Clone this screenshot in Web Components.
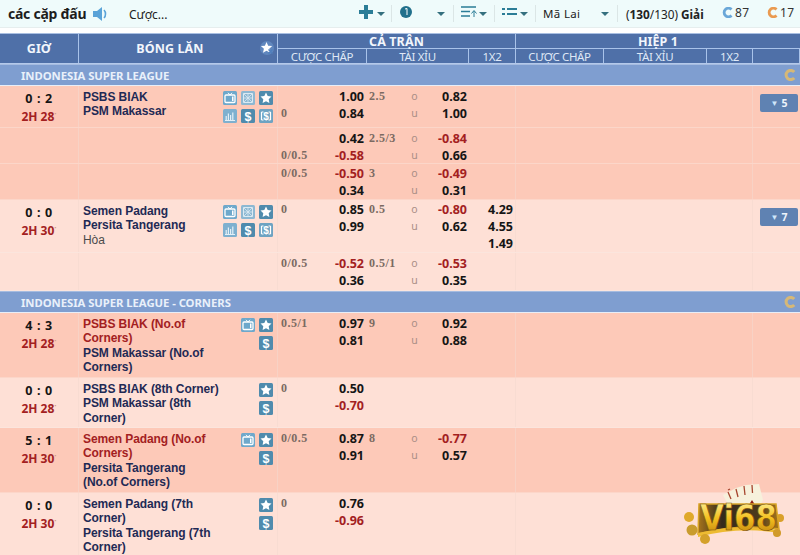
<!DOCTYPE html>
<html lang="vi">
<head>
<meta charset="utf-8">
<title>Bóng lăn</title>
<style>
  html, body { margin: 0; height: 555px; overflow: hidden; background: #fff; }
  body { position: relative; font-family: "Noto Sans", "DejaVu Sans", sans-serif; }
  match-row b { color: #a3201f; }
  match-row small { font-size: 12px; font-weight: 400; color: #4a4a4a; }
</style>
</head>
<body>
<top-bar></top-bar>
<table-head></table-head>

<league-bar>INDONESIA SUPER LEAGUE</league-bar>
<match-row tone="dark" height="42" pad="2" score="0 : 2" clock="2H 28" icons="tv grid star chart dollar mix" more="5">
  <span slot="teams">PSBS BIAK<br>PSM Makassar</span>
  <bet-line hodd="1.00" total="2.5" side="o" todd="0.82"></bet-line>
  <bet-line hcap="0" hodd="0.84" side="u" todd="1.00"></bet-line>
</match-row>
<match-row tone="dark" height="36" pad="2">
  <bet-line hodd="0.42" total="2.5/3" side="o" todd="-0.84"></bet-line>
  <bet-line hcap="0/0.5" hodd="-0.58" side="u" todd="0.66"></bet-line>
</match-row>
<match-row tone="dark" height="36" pad="1">
  <bet-line hcap="0/0.5" hodd="-0.50" total="3" side="o" todd="-0.49"></bet-line>
  <bet-line hodd="0.34" side="u" todd="0.31"></bet-line>
</match-row>
<match-row tone="light" height="53" pad="1" score="0 : 0" clock="2H 30" icons="tv grid star chart dollar mix" more="7">
  <span slot="teams">Semen Padang<br>Persita Tangerang<br><small>Hòa</small></span>
  <bet-line hcap="0" hodd="0.85" total="0.5" side="o" todd="-0.80" wins="4.29"></bet-line>
  <bet-line hodd="0.99" side="u" todd="0.62" wins="4.55"></bet-line>
  <bet-line wins="1.49"></bet-line>
</match-row>
<match-row tone="light" height="38" pad="2">
  <bet-line hcap="0/0.5" hodd="-0.52" total="0.5/1" side="o" todd="-0.53"></bet-line>
  <bet-line hodd="0.36" side="u" todd="0.35"></bet-line>
</match-row>

<league-bar>INDONESIA SUPER LEAGUE - CORNERS</league-bar>
<match-row tone="dark" height="65" pad="2" score="4 : 3" clock="2H 28" icons="tv star blank dollar">
  <span slot="teams"><b>PSBS BIAK (No.of<br>Corners)</b><br>PSM Makassar (No.of<br>Corners)</span>
  <bet-line hcap="0.5/1" hodd="0.97" total="9" side="o" todd="0.92"></bet-line>
  <bet-line hodd="0.81" side="u" todd="0.88"></bet-line>
</match-row>
<match-row tone="light" height="50" pad="2" score="0 : 0" clock="2H 28" icons="star dollar">
  <span slot="teams">PSBS BIAK (8th Corner)<br>PSM Makassar (8th<br>Corner)</span>
  <bet-line hcap="0" hodd="0.50"></bet-line>
  <bet-line hodd="-0.70"></bet-line>
</match-row>
<match-row tone="dark" height="65" pad="2" score="5 : 1" clock="2H 30" icons="tv star blank dollar">
  <span slot="teams"><b>Semen Padang (No.of<br>Corners)</b><br>Persita Tangerang<br>(No.of Corners)</span>
  <bet-line hcap="0/0.5" hodd="0.87" total="8" side="o" todd="-0.77"></bet-line>
  <bet-line hodd="0.91" side="u" todd="0.57"></bet-line>
</match-row>
<match-row tone="light" height="64" pad="2" score="0 : 0" clock="2H 30" icons="star dollar">
  <span slot="teams">Semen Padang (7th<br>Corner)<br>Persita Tangerang (7th<br>Corner)</span>
  <bet-line hcap="0" hodd="0.76"></bet-line>
  <bet-line hodd="-0.96"></bet-line>
</match-row>

<vi-logo></vi-logo>

<script>
const ICONS = {
  tv: '<rect x="2" y="4" width="10" height="7.500" rx="1" fill="none" stroke="#fff" stroke-width="1.300"/><path d="M5 1.800 7 4l2-2.200" fill="none" stroke="#fff"/><rect x="9" y="5.500" width="1.500" height="4.500" fill="#fff"/>',
  grid: '<path d="M2.500 2.500h9v9h-9z" fill="none" stroke="#dbeaf3"/><path d="M2.500 7h9M7 2.500v9M3 3l8 8M11 3l-8 8" stroke="#dbeaf3" stroke-width=".8"/>',
  star: '<path d="M7 1.600l1.700 3.500 3.800.5-2.800 2.600.7 3.800L7 10.200 3.600 12l.7-3.800L1.500 5.600l3.800-.5z" fill="#fff"/>',
  chart: '<path d="M2 11.500h10M3.200 11V7M5.400 11V4.500M7.600 11V6M9.800 11V3.500" stroke="#e3f0f7" stroke-width="1.200" fill="none"/>',
  dollar: '<text x="7" y="11.500" text-anchor="middle" font-family="Liberation Sans" font-weight="700" font-size="12.500" fill="#fff">$</text>',
  mix: '<path d="M2.500 3v8M11.500 3v8" stroke="#fff" stroke-width="1.200"/><path d="M2.500 3h2M2.500 11h2M9.500 3h2M9.500 11h2" stroke="#fff"/><text x="7" y="10.500" text-anchor="middle" font-family="Liberation Sans" font-weight="700" font-size="10" fill="#fff">$</text>'
};
const ICON_FILL = { tv: '#6ea8cb', grid: '#8db8d2', star: '#4f8bad', chart: '#7eb0cf', dollar: '#4f8bad', mix: '#6ea3c2' };

class BetIcon extends HTMLElement {
  constructor() {
    super();
    this.attachShadow({mode: 'open'});
    const name = this.getAttribute('name');
    this.shadowRoot.innerHTML = `
      <style>
        :host { display: block; width: 14px; height: 14px; }
        svg { display: block; }
      </style>
      ${name === 'blank' ? '' : `<svg width="14" height="14" viewBox="0 0 14 14">
        <rect width="14" height="14" rx="1.500" fill="${ICON_FILL[name]}"/>${ICONS[name]}
      </svg>`}`;
  }
}
customElements.define('bet-icon', BetIcon);

class TopBar extends HTMLElement {
  constructor() {
    super();
    this.attachShadow({mode: 'open'});
    const caret = '<i class="caret"></i>';
    this.shadowRoot.innerHTML = `
      <style>
        :host { display: flex; align-items: center; height: 27px; background: #effbfb; border-bottom: 1px solid #e6eeee;
          margin-bottom: 5px; font-size: 11.5px; color: #222; white-space: nowrap; }
        .title { margin-left: 8px; width: 84px; font-size: 14px; font-weight: 700; letter-spacing: -.25px; color: #1d1d1d; }
        .say { width: 17px; height: 16px; }
        .bet { margin-left: 20px; width: 230px; font-size: 12px; padding-top: 2px; }
        .tool { display: flex; align-items: center; height: 17px; border-right: 1px solid #dbe6e6; box-sizing: border-box; }
        .tool svg { margin-bottom: 3px; }
        .caret { display: block; width: 0; height: 0; border: 4px solid transparent; border-top: 4px solid #35707f; border-bottom: 0; }
        .lang { padding-left: 7px; letter-spacing: .35px; }
        .count { margin-left: 8px; width: 96px; font-size: 11.8px; }
        .mark { display: flex; align-items: center; gap: 2px; font-size: 12px; color: #333; letter-spacing: .3px; margin-top: -2px; }
        svg { display: block; }
      </style>
      <div class="title">các cặp đấu</div>
      <svg class="say" viewBox="0 0 17 16"><path d="M1 5h4l5-4v14l-5-4H1z" fill="#5aa3d8"/><path d="M12 4c2 2 2 6 0 8" fill="none" stroke="#5aa3d8" stroke-width="1.600"/></svg>
      <div class="bet">Cược...</div>
      <div class="tool" style="width:33px;gap:4px"><svg width="14" height="14" viewBox="0 0 14 14"><path d="M5 0h4v5h5v4H9v5H5V9H0V5h5z" fill="#2b7d97"/></svg>${caret}</div>
      <div class="tool" style="width:62px;padding-left:8px;gap:25px"><svg width="12" height="12" viewBox="0 0 12 12"><circle cx="6" cy="6" r="6" fill="#21708c"/><path d="M5 3l2-.5V9" stroke="#fff" fill="none"/></svg>${caret}</div>
      <div class="tool" style="width:41px;padding-left:7px;gap:2px"><svg width="16" height="12" viewBox="0 0 16 12"><path d="M0 1h15M0 5.500h9M0 10h9" stroke="#2b7d97" stroke-width="1.600"/><path d="M13 11V5M10.500 7.500 13 4.500l2.500 3" stroke="#2b7d97" fill="none"/></svg>${caret}</div>
      <div class="tool" style="width:41px;padding-left:7px;gap:3px"><svg width="15" height="8" viewBox="0 0 15 8"><path d="M0 1h3M5 1h10M0 6h3M5 6h10" stroke="#2b7d97" stroke-width="2"/></svg>${caret}</div>
      <div class="tool lang" style="width:82px"><span style="width:58px">Mã Lai</span>${caret}</div>
      <div class="count">(<b>130</b>/130) <b>Giải</b></div>
      <div class="mark" style="width:45px"><svg width="11" height="11" viewBox="0 0 11 11"><path d="M9.500 2.500a4.300 4.300 0 1 0 0 6" fill="none" stroke="#6aa7d8" stroke-width="2.800"/></svg>87</div>
      <div class="mark"><svg width="11" height="11" viewBox="0 0 11 11"><path d="M9.500 2.500a4.300 4.300 0 1 0 0 6" fill="none" stroke="#ea9a50" stroke-width="2.800"/></svg>17</div>`;
  }
}
customElements.define('top-bar', TopBar);

class TableHead extends HTMLElement {
  constructor() {
    super();
    this.attachShadow({mode: 'open'});
    this.shadowRoot.innerHTML = `
      <style>
        :host { display: grid; height: 31px; background: #4f70a8; color: #f2f6fc; box-sizing: border-box;
          border-top: 1px solid #a9bfe2; border-bottom: 1px solid #b4c9ea;
          grid-template-columns: 79px 199px 89px 102px 47px 88px 103px 46px 47px; grid-template-rows: 15px 14px; }
        div { display: flex; align-items: center; justify-content: center; box-sizing: border-box;
          border-right: 1px solid #a9c3ea; white-space: nowrap; font-size: 12px; }
        .big { grid-row: 1 / 3; font: 700 12.500px "Noto Sans", sans-serif; position: relative; letter-spacing: .1px; }
        .left { padding-right: 16px; }
        .span { font: 700 12.500px "Noto Sans", sans-serif; letter-spacing: .1px; border-bottom: 1px solid #a9c3ea; padding-top: 1px; }
        .sub { font-size: 11.500px; letter-spacing: -.35px; color: #dfe8f6; }
        .end { border-right: 0; }
        svg { position: absolute; right: 3px; top: 7px; }
      </style>
      <div class="big">GIỜ</div>
      <div class="big left">BÓNG LĂN
        <svg width="14" height="14" viewBox="0 0 14 14"><circle cx="7" cy="7" r="7" fill="#6f9ad0" opacity=".55"/><path d="M6.500 1l1.700 3.700 4 .4-3 2.700.9 4L6.500 9.700 3 11.800l.9-4-3-2.700 4-.4z" fill="#fff"/><path d="M8.500 8.500l4 4M12.500 8.500l-4 4" stroke="#4f7fbd" stroke-width="1.300"/></svg>
      </div>
      <div class="span" style="grid-column:3 / 6">CẢ TRẬN</div>
      <div class="span end" style="grid-column:6 / 10">HIỆP 1</div>
      <div class="sub">CƯỢC CHẤP</div><div class="sub">TÀI XỈU</div><div class="sub">1X2</div>
      <div class="sub">CƯỢC CHẤP</div><div class="sub">TÀI XỈU</div><div class="sub">1X2</div>
      <div class="sub"></div><div class="sub end"></div>`;
  }
}
customElements.define('table-head', TableHead);

class LeagueBar extends HTMLElement {
  constructor() {
    super();
    this.attachShadow({mode: 'open'});
    this.shadowRoot.innerHTML = `
      <style>
        :host { display: flex; align-items: center; justify-content: space-between; height: 22px; box-sizing: border-box;
          padding: 0 4px 0 21px; background: #7f9ed0; border-top: 1px solid #a6bce0; border-bottom: 1px solid #e8eef8;
          color: #e9f0fa; font: 700 11.300px "Noto Sans", sans-serif; letter-spacing: -.05px; }
        svg { display: block; }
      </style>
      <span><slot></slot></span>
      <svg width="12" height="12" viewBox="0 0 12 12"><path d="M10.200 3a4.600 4.600 0 1 0 0 6" fill="none" stroke="#d6b877" stroke-width="3"/></svg>`;
  }
}
customElements.define('league-bar', LeagueBar);

class MatchRow extends HTMLElement {
  constructor() {
    super();
    this.attachShadow({mode: 'open'});
    const get = n => this.getAttribute(n);
    const icons = (get('icons') || '').split(' ').filter(Boolean);
    const cols = icons.length > 4 ? 3 : icons.length === 4 ? 2 : 1;
    const dark = get('tone') === 'dark';
    this.shadowRoot.innerHTML = `
      <style>
        :host { display: grid; grid-template-columns: 79px 199px 238px 237px 47px; box-sizing: border-box;
          height: ${get('height')}px; background: ${dark ? '#fdc9b8' : '#fee0d6'};
          border-bottom: 1px solid ${dark ? '#fcd6c9' : '#fbe5dd'}; overflow: hidden; }
        .cell { box-sizing: border-box; border-right: 1px solid ${dark ? '#f8d2c5' : '#f8dcd2'}; min-width: 0; }
        .time { display: flex; flex-direction: column; align-items: center; padding-top: 4px; }
        .score { font: 700 12.500px/17px "Noto Sans", sans-serif; letter-spacing: .6px; color: #151515; height: 18px; }
        .clock { font: 700 12px/17px "Noto Sans", sans-serif; color: #a3201f; }
        .clock sup { font-size: 6px; line-height: 0; color: #c98; font-weight: 400; }
        .match { display: flex; justify-content: space-between; padding: 4px 4px 0 4px; }
        .teams { font: 700 12px/14.300px "Liberation Sans", sans-serif; color: #1f2a55; white-space: nowrap; letter-spacing: -.08px; }
        .icons { display: grid; grid-template-columns: repeat(${cols}, 14px); grid-auto-rows: 14px; gap: 4px; align-content: start; padding-top: 1px; }
        .bets { padding-top: ${get('pad')}px; }
        .more { display: flex; justify-content: flex-end; padding: 8px 2px 0 0; }
        .btn { width: 38px; height: 18px; border-radius: 2px; background: #5f82b2; color: #eef4fb; font: 700 10.500px/18px "Noto Sans", sans-serif;
          text-align: center; box-sizing: border-box; }
        .btn i { font-style: normal; font-size: 8px; vertical-align: 1px; color: #cfe6fa; margin-right: 3px; }
        .last { border-right: 0; }
        ::slotted(span) { display: block; }
      </style>
      <div class="cell time">
        ${get('score') ? `<div class="score">${get('score')}</div><div class="clock">${get('clock')}<sup>•</sup></div>` : ''}
      </div>
      <div class="cell match">
        <div class="teams"><slot name="teams"></slot></div>
        <div class="icons">${icons.map(n => `<bet-icon name="${n}"></bet-icon>`).join('')}</div>
      </div>
      <div class="cell bets"><slot></slot></div>
      <div class="cell"></div>
      <div class="cell more last">${get('more') ? `<div class="btn"><i>▼</i>${get('more')}</div>` : ''}</div>`;
  }
}
customElements.define('match-row', MatchRow);

class BetLine extends HTMLElement {
  constructor() {
    super();
    this.attachShadow({mode: 'open'});
    const get = n => this.getAttribute(n) || '';
    const odd = v => `odd${v.startsWith('-') ? ' neg' : ''}`;
    this.shadowRoot.innerHTML = `
      <style>
        :host { display: grid; grid-template-columns: 3px 47px 36px 5px 40px 11px 47px 46px 3px; height: 17px; line-height: 17px; white-space: nowrap; }
        .line { font: 700 12px/17px "Liberation Serif", serif; color: #7b6a62; letter-spacing: .5px; }
        .side { font: 400 10.500px/17px "Noto Sans", sans-serif; color: #a98e86; text-align: center; }
        .odd { font: 700 12.500px/17px "Noto Sans", sans-serif; color: #151515; text-align: right; }
        .neg { color: #a3201f; }
      </style>
      <span></span>
      <span class="line">${get('hcap')}</span>
      <span class="${odd(get('hodd'))}">${get('hodd')}</span>
      <span></span>
      <span class="line">${get('total')}</span>
      <span class="side">${get('side')}</span>
      <span class="${odd(get('todd'))}">${get('todd')}</span>
      <span class="odd">${get('wins')}</span>
      <span></span>`;
  }
}
customElements.define('bet-line', BetLine);

class ViLogo extends HTMLElement {
  constructor() {
    super();
    this.attachShadow({mode: 'open'});
    this.shadowRoot.innerHTML = `
      <style>
        :host { position: absolute; left: 680px; top: 480px; width: 106px; height: 68px; }
        svg { display: block; overflow: visible; }
      </style>
      <svg width="106" height="68" viewBox="0 0 106 68">
        <defs>
          <linearGradient id="au" x1="0" y1="0" x2="0" y2="1">
            <stop offset="0" stop-color="#fff6a8"/><stop offset=".5" stop-color="#f5c120"/><stop offset="1" stop-color="#b87a0c"/>
          </linearGradient>
          <linearGradient id="band" x1="0" y1="0" x2="1" y2="0">
            <stop offset="0" stop-color="#a8761a"/><stop offset=".3" stop-color="#33291c"/><stop offset=".75" stop-color="#4c3a1c"/><stop offset="1" stop-color="#a8761a"/>
          </linearGradient>
          <filter id="soft" x="-20%" y="-20%" width="140%" height="140%"><feGaussianBlur stdDeviation=".6"/></filter>
        </defs>
        <g filter="url(#soft)">
          <circle cx="9" cy="37" r="5" fill="#e0a92a"/>
          <circle cx="100" cy="38" r="4" fill="#d9a02a"/>
          <path d="M43 15 56 8l10-3 13-1 4 16-4 8H50z" fill="#f7f1dc"/>
          <path d="M50 9l-2 1M48 12l3 7M56 9l2 8M64 6l1 9M72 5l.5 8" stroke="#a6452e" stroke-width="1.300" fill="none"/>
          <path d="M72 20l-5 8h10z" fill="#8c1f12"/>
          <path d="M19 24h77l3 25q-40-6-81 5z" fill="url(#band)" stroke="#d9a528" stroke-width="1.500"/>
          <path d="M18 53q40-9 81-3l1 3q-41-7-82 4z" fill="#edbb33"/>
          <circle cx="12" cy="50" r="5.500" fill="#c99c2e"/>
          <circle cx="25" cy="59" r="5" fill="#d4a12c"/>
          <circle cx="97" cy="53" r="4" fill="#d19a2a"/>
        </g>
        <text x="20" y="50" font-family="DejaVu Sans, sans-serif" font-weight="700" font-size="35" fill="url(#au)" stroke="#7a4e06" stroke-width=".6" textLength="77" lengthAdjust="spacingAndGlyphs">Vi68</text>
      </svg>`;
  }
}
customElements.define('vi-logo', ViLogo);
</script>
</body>
</html>
